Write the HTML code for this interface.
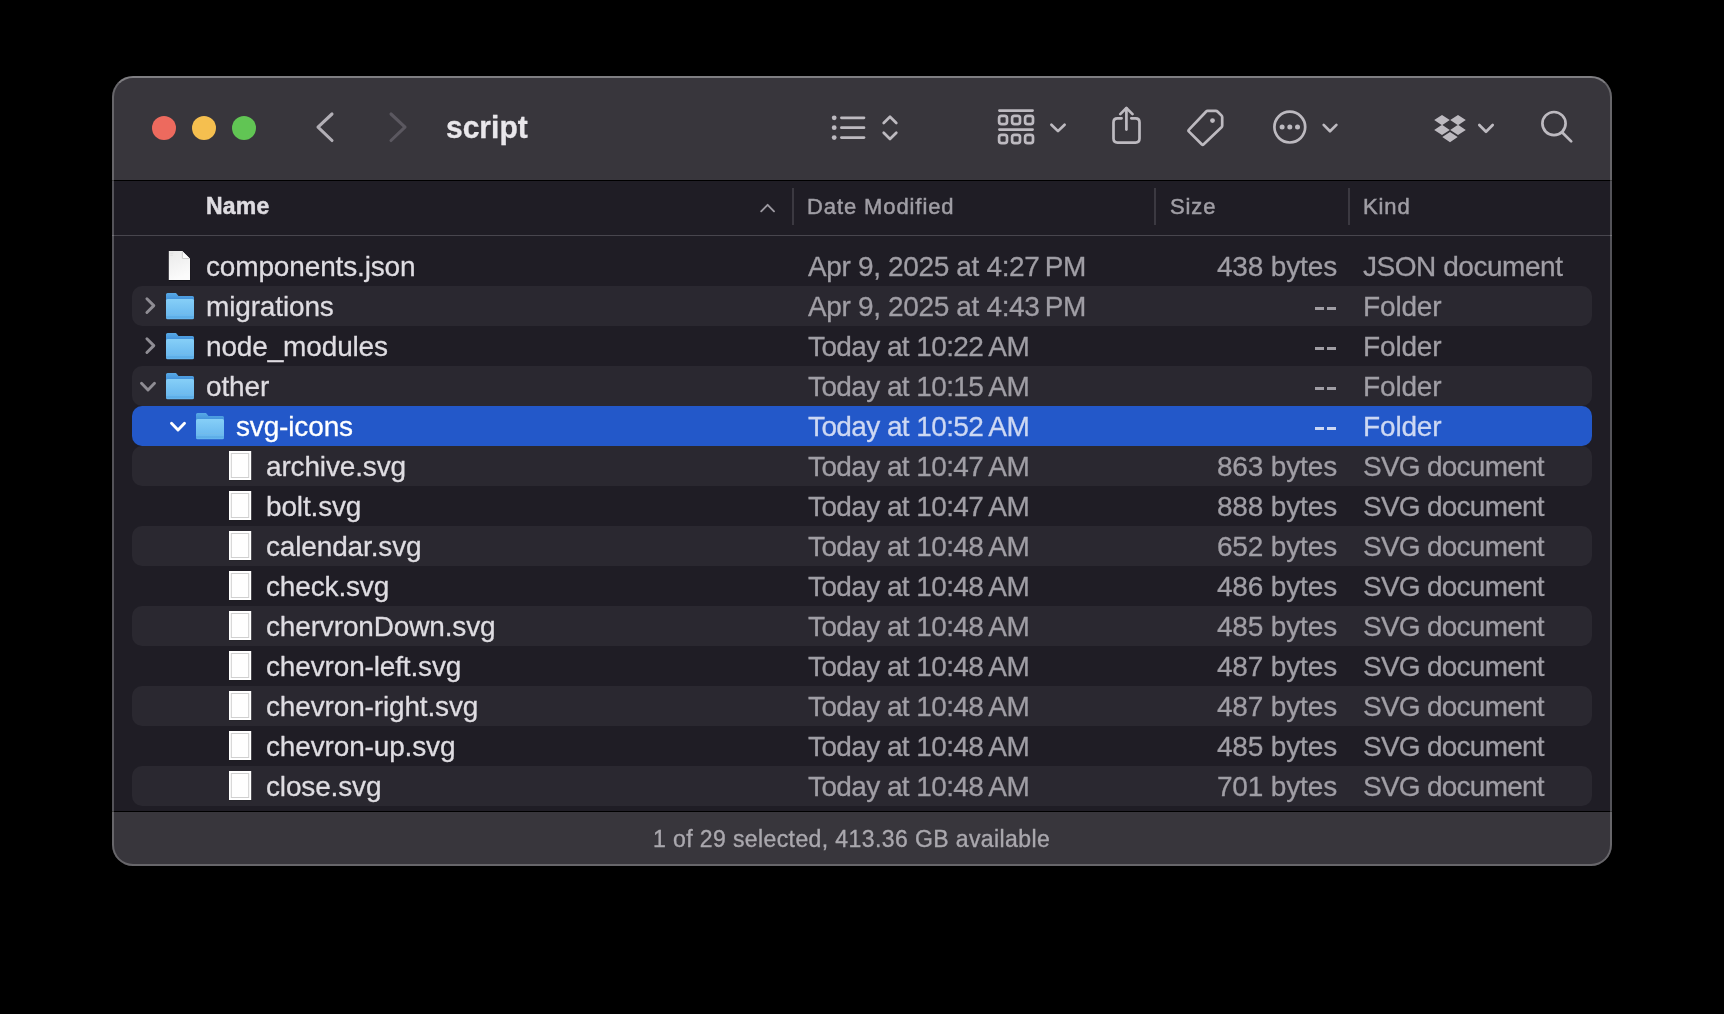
<!DOCTYPE html>
<html><head><meta charset="utf-8">
<style>
html,body{margin:0;padding:0;}
body{width:1724px;height:1014px;background:#000;position:relative;overflow:hidden;font-family:"Liberation Sans",sans-serif;}
#win{position:absolute;left:112px;top:76px;width:1500px;height:790px;border-radius:21px;background:#38363c;overflow:hidden;will-change:transform;}
#winborder{position:absolute;left:112px;top:76px;width:1500px;height:790px;border-radius:21px;box-sizing:border-box;border:2px solid rgba(255,255,255,0.24);border-top-color:rgba(255,255,255,0.36);}
.ln{position:absolute;left:0;width:1500px;}
#list{position:absolute;left:0;top:105px;width:1500px;height:630px;background:#1f1d25;}
.row{position:absolute;left:20px;width:1460px;height:40px;border-radius:10px;}
.alt{background:#2a2830;}
.sel{background:#2358c9;}
.t{position:absolute;white-space:nowrap;font-size:28px;letter-spacing:-0.15px;line-height:40px;top:0;-webkit-text-stroke-width:0.3px;}
.nm{color:#dfdde2;}
.gr{color:#a09ea5;}
.hd{position:absolute;top:-1px;font-size:22px;line-height:53px;white-space:nowrap;color:#a09ea5;letter-spacing:0.9px;-webkit-text-stroke-width:0.5px;}
svg{display:block;}
</style></head>
<body>
<div id="win">

<div style="position:absolute;left:40px;top:40px;width:24px;height:24px;border-radius:50%;background:#ed6a5e;"></div>
<div style="position:absolute;left:80px;top:40px;width:24px;height:24px;border-radius:50%;background:#f5bf4f;"></div>
<div style="position:absolute;left:120px;top:40px;width:24px;height:24px;border-radius:50%;background:#61c554;"></div>
<svg width="1500" height="104" viewBox="112 76 1500 104" style="position:absolute;left:0;top:0">
<path d="M332 114 L318 127.2 L332 140.5" fill="none" stroke="#b2afb6" stroke-width="3.1" stroke-linecap="round" stroke-linejoin="round"/>
<path d="M391 114 L405 127.2 L391 140.5" fill="none" stroke="#5b5860" stroke-width="3.1" stroke-linecap="round" stroke-linejoin="round"/>
<circle cx="834.2" cy="117.8" r="2.4" fill="#bdbac0"/>
<path d="M841.4 117.8 H864" fill="none" stroke="#bdbac0" stroke-width="2.7" stroke-linecap="round" stroke-linejoin="round" stroke-width="2.9"/>
<circle cx="834.2" cy="127.7" r="2.4" fill="#bdbac0"/>
<path d="M841.4 127.7 H864" fill="none" stroke="#bdbac0" stroke-width="2.7" stroke-linecap="round" stroke-linejoin="round" stroke-width="2.9"/>
<circle cx="834.2" cy="137.6" r="2.4" fill="#bdbac0"/>
<path d="M841.4 137.6 H864" fill="none" stroke="#bdbac0" stroke-width="2.7" stroke-linecap="round" stroke-linejoin="round" stroke-width="2.9"/>
<path d="M883.7 123 L890 116.7 L896.3 123 M883.7 132.7 L890 139 L896.3 132.7" fill="none" stroke="#bdbac0" stroke-width="2.7" stroke-linecap="round" stroke-linejoin="round" stroke-width="2.8"/>
<path d="M999.4 110.6 H1032.6 M999.4 129.6 H1032.6" fill="none" stroke="#bdbac0" stroke-width="2.7" stroke-linecap="round" stroke-linejoin="round" stroke-width="2.7"/>
<rect x="999.1" y="115.95" width="7.9" height="8.2" rx="2.4" fill="none" stroke="#bdbac0" stroke-width="2.7" stroke-linecap="round" stroke-linejoin="round" stroke-width="2.1"/>
<rect x="999.1" y="134.95" width="7.9" height="8.2" rx="2.4" fill="none" stroke="#bdbac0" stroke-width="2.7" stroke-linecap="round" stroke-linejoin="round" stroke-width="2.1"/>
<rect x="1012.1" y="115.95" width="7.9" height="8.2" rx="2.4" fill="none" stroke="#bdbac0" stroke-width="2.7" stroke-linecap="round" stroke-linejoin="round" stroke-width="2.1"/>
<rect x="1012.1" y="134.95" width="7.9" height="8.2" rx="2.4" fill="none" stroke="#bdbac0" stroke-width="2.7" stroke-linecap="round" stroke-linejoin="round" stroke-width="2.1"/>
<rect x="1025.1" y="115.95" width="7.9" height="8.2" rx="2.4" fill="none" stroke="#bdbac0" stroke-width="2.7" stroke-linecap="round" stroke-linejoin="round" stroke-width="2.1"/>
<rect x="1025.1" y="134.95" width="7.9" height="8.2" rx="2.4" fill="none" stroke="#bdbac0" stroke-width="2.7" stroke-linecap="round" stroke-linejoin="round" stroke-width="2.1"/>
<path d="M1051.4 124.7 L1058 131.1 L1064.6 124.7" fill="none" stroke="#bdbac0" stroke-width="2.7" stroke-linecap="round" stroke-linejoin="round" stroke-width="2.9"/>
<path d="M1121.6 118.3 H1117.5 Q1113.5 118.3 1113.5 122.3 V138.6 Q1113.5 142.6 1117.5 142.6 H1135.5 Q1139.5 142.6 1139.5 138.6 V122.3 Q1139.5 118.3 1135.5 118.3 H1131.3" fill="none" stroke="#bdbac0" stroke-width="2.7" stroke-linecap="round" stroke-linejoin="round" stroke-width="2.9"/>
<path d="M1126.4 129.6 V108.4" fill="none" stroke="#bdbac0" stroke-width="2.7" stroke-linecap="round" stroke-linejoin="round" stroke-width="2.6"/>
<path d="M1120.3 114.1 L1126.4 108 L1132.5 114.1" fill="none" stroke="#bdbac0" stroke-width="2.7" stroke-linecap="round" stroke-linejoin="round" stroke-width="2.4"/>
<path d="M1207.5 110.9 H1215.8 Q1216.9 110.9 1217.7 111.7 L1221.4 115.4 Q1222.2 116.2 1222.2 117.3 V125.6 Q1222.2 126.6 1221.5 127.3 L1203.7 144.3 Q1202.7 145.2 1201.7 144.3 L1189 131.6 Q1188 130.6 1189 129.6 L1206.2 111.5 Q1206.8 110.9 1207.5 110.9 Z" fill="none" stroke="#bdbac0" stroke-width="2.7" stroke-linecap="round" stroke-linejoin="round" stroke-width="2.8"/>
<circle cx="1212.5" cy="120.6" r="2.4" fill="#bdbac0"/>
<circle cx="1289.8" cy="127.1" r="15.4" fill="none" stroke="#bdbac0" stroke-width="2.7" stroke-linecap="round" stroke-linejoin="round" stroke-width="3"/>
<circle cx="1282.1" cy="127.1" r="2.5" fill="#bdbac0"/>
<circle cx="1289.8" cy="127.1" r="2.5" fill="#bdbac0"/>
<circle cx="1297.5" cy="127.1" r="2.5" fill="#bdbac0"/>
<path d="M1323.7 124.9 L1330 131.2 L1336.4 124.9" fill="none" stroke="#bdbac0" stroke-width="2.7" stroke-linecap="round" stroke-linejoin="round" stroke-width="2.8"/>
<path d="M1434.2 120.1 L1442 114.89999999999999 L1449.8 120.1 L1442 125.3 Z M1450.2 120.1 L1458 114.89999999999999 L1465.8 120.1 L1458 125.3 Z M1434.2 129.9 L1442 124.7 L1449.8 129.9 L1442 135.1 Z M1450.2 129.9 L1458 124.7 L1465.8 129.9 L1458 135.1 Z M1442.3 137.1 L1450 132.0 L1457.7 137.1 L1450 142.2 Z" fill="#bdbac0"/>
<path d="M1479.3 125 L1486 131.7 L1492.7 125" fill="none" stroke="#bdbac0" stroke-width="2.7" stroke-linecap="round" stroke-linejoin="round" stroke-width="2.8"/>
<circle cx="1554" cy="123.6" r="11.6" fill="none" stroke="#bdbac0" stroke-width="2.7" stroke-linecap="round" stroke-linejoin="round" stroke-width="3.4"/>
<path d="M1562.8 133 L1571.2 141.4" fill="none" stroke="#bdbac0" stroke-width="2.7" stroke-linecap="round" stroke-linejoin="round" stroke-width="3.9"/>
</svg>
<div style="position:absolute;left:334px;top:32px;font-size:30px;line-height:40px;font-weight:bold;color:#e9e7eb;white-space:nowrap;transform:scaleY(1.06);transform-origin:0 30.4px;-webkit-text-stroke-width:0.3px;">script</div>
<div class="ln" style="top:104px;height:1px;background:#000;"></div>
<div id="list">
<div class="hd" style="left:94px;top:-1px;font-size:23px;letter-spacing:0.2px;font-weight:bold;color:#dedce1;">Name</div>
<svg width="20" height="14" style="position:absolute;left:648px;top:20px"><path d="M1.2 10.3 L7.6 3.8 L14 10.3" fill="none" stroke="#9c99a1" stroke-width="1.9" stroke-linecap="round" stroke-linejoin="round"/></svg>
<div style="position:absolute;left:680px;top:7px;width:2px;height:37px;background:#3b3941;"></div>
<div style="position:absolute;left:1042px;top:7px;width:2px;height:37px;background:#3b3941;"></div>
<div style="position:absolute;left:1236px;top:7px;width:2px;height:37px;background:#3b3941;"></div>
<div class="hd" style="left:695px;">Date Modified</div>
<div class="hd" style="left:1058px;">Size</div>
<div class="hd" style="left:1251px;">Kind</div>
<div class="ln" style="top:54px;height:1px;background:#48464e;"></div>
<div class="row" style="top:65px;"></div>
<svg width="26" height="34" viewBox="-1.8 -1.9 26 34" style="position:absolute;left:55px;top:68px">
<defs><linearGradient id="dg" x1="0" y1="0" x2="0.3" y2="1"><stop offset="0" stop-color="#e9e9e9"/><stop offset="1" stop-color="#fbfbfb"/></linearGradient></defs>
<path d="M0 0.3 H13.6 L21.2 7.9 V29.3 H0 Z" fill="#000" opacity="0.45" transform="translate(0.2,0.5)"/>
<path d="M0 0 H13.4 L21.2 7.8 V29 H0 Z" fill="url(#dg)"/>
<path d="M13.4 0 V7.8 H21.2 Z" fill="#fdfdfd"/>
<path d="M13.6 0.4 V7.6 H20.8" fill="none" stroke="#c8c8c8" stroke-width="0.9"/>
<path d="M1.5 2.5 H4.5 M1.5 4.5 H4" stroke="#dedede" stroke-width="0.8"/>
</svg>
<div class="t" style="left:94px;top:66px;color:#dfdde2;">components.json</div>
<div class="t" style="left:696px;top:66px;color:#a09ea5;letter-spacing:-0.35px;">Apr 9, 2025 at 4:27 PM</div>
<div class="t" style="right:275px;top:66px;color:#a09ea5;text-align:right;">438 bytes</div>
<div class="t" style="left:1251px;top:66px;color:#a09ea5;letter-spacing:-0.45px;">JSON document</div>
<div class="row alt" style="top:105px;"></div>
<svg width="30" height="28" viewBox="0 0 30 28" style="position:absolute;left:53px;top:112px;overflow:visible">
<defs>
<linearGradient id="fb1" x1="0" y1="0" x2="0" y2="1"><stop offset="0" stop-color="#86cff7"/><stop offset="1" stop-color="#64b4ed"/></linearGradient>
<linearGradient id="ft1" x1="0" y1="0" x2="0" y2="1"><stop offset="0" stop-color="#58aae6"/><stop offset="1" stop-color="#3f8ed9"/></linearGradient>
</defs>
<path d="M1 1.5 Q1 0 2.5 0 H11 L13.5 3 H27.5 Q29 3 29 4.5 V8 H1 Z" fill="url(#ft1)"/>
<rect x="1" y="6" width="28" height="20.3" rx="1.6" fill="url(#fb1)"/>
<rect x="1" y="20" width="28" height="1" fill="#74bcea" opacity="0.8"/>
<rect x="1" y="23.5" width="28" height="1" fill="#4f9fdc" opacity="0.7"/>
</svg>
<svg width="40" height="40" viewBox="130 286 40 40" style="position:absolute;left:18px;top:105px"><path d="M146.9 298.70000000000005 L153.8 305.6 L146.9 312.5" fill="none" stroke="#8f8d94" stroke-width="2.9" stroke-linecap="round" stroke-linejoin="round"/></svg>
<div class="t" style="left:94px;top:106px;color:#dfdde2;">migrations</div>
<div class="t" style="left:696px;top:106px;color:#a09ea5;letter-spacing:-0.35px;">Apr 9, 2025 at 4:43 PM</div>
<div style="position:absolute;left:1203px;top:126px;width:9px;height:2.8px;background:#a09ea5;"></div>
<div style="position:absolute;left:1215px;top:126px;width:9px;height:2.8px;background:#a09ea5;"></div>
<div class="t" style="left:1251px;top:106px;color:#a09ea5;letter-spacing:-0.15px;">Folder</div>
<div class="row" style="top:145px;"></div>
<svg width="30" height="28" viewBox="0 0 30 28" style="position:absolute;left:53px;top:152px;overflow:visible">
<defs>
<linearGradient id="fb2" x1="0" y1="0" x2="0" y2="1"><stop offset="0" stop-color="#86cff7"/><stop offset="1" stop-color="#64b4ed"/></linearGradient>
<linearGradient id="ft2" x1="0" y1="0" x2="0" y2="1"><stop offset="0" stop-color="#58aae6"/><stop offset="1" stop-color="#3f8ed9"/></linearGradient>
</defs>
<path d="M1 1.5 Q1 0 2.5 0 H11 L13.5 3 H27.5 Q29 3 29 4.5 V8 H1 Z" fill="url(#ft2)"/>
<rect x="1" y="6" width="28" height="20.3" rx="1.6" fill="url(#fb2)"/>
<rect x="1" y="20" width="28" height="1" fill="#74bcea" opacity="0.8"/>
<rect x="1" y="23.5" width="28" height="1" fill="#4f9fdc" opacity="0.7"/>
</svg>
<svg width="40" height="40" viewBox="130 326 40 40" style="position:absolute;left:18px;top:145px"><path d="M146.9 338.70000000000005 L153.8 345.6 L146.9 352.5" fill="none" stroke="#8f8d94" stroke-width="2.9" stroke-linecap="round" stroke-linejoin="round"/></svg>
<div class="t" style="left:94px;top:146px;color:#dfdde2;">node_modules</div>
<div class="t" style="left:696px;top:146px;color:#a09ea5;letter-spacing:-0.6px;">Today at 10:22 AM</div>
<div style="position:absolute;left:1203px;top:166px;width:9px;height:2.8px;background:#a09ea5;"></div>
<div style="position:absolute;left:1215px;top:166px;width:9px;height:2.8px;background:#a09ea5;"></div>
<div class="t" style="left:1251px;top:146px;color:#a09ea5;letter-spacing:-0.15px;">Folder</div>
<div class="row alt" style="top:185px;"></div>
<svg width="30" height="28" viewBox="0 0 30 28" style="position:absolute;left:53px;top:192px;overflow:visible">
<defs>
<linearGradient id="fb3" x1="0" y1="0" x2="0" y2="1"><stop offset="0" stop-color="#86cff7"/><stop offset="1" stop-color="#64b4ed"/></linearGradient>
<linearGradient id="ft3" x1="0" y1="0" x2="0" y2="1"><stop offset="0" stop-color="#58aae6"/><stop offset="1" stop-color="#3f8ed9"/></linearGradient>
</defs>
<path d="M1 1.5 Q1 0 2.5 0 H11 L13.5 3 H27.5 Q29 3 29 4.5 V8 H1 Z" fill="url(#ft3)"/>
<rect x="1" y="6" width="28" height="20.3" rx="1.6" fill="url(#fb3)"/>
<rect x="1" y="20" width="28" height="1" fill="#74bcea" opacity="0.8"/>
<rect x="1" y="23.5" width="28" height="1" fill="#4f9fdc" opacity="0.7"/>
</svg>
<svg width="40" height="40" viewBox="128 366 40 40" style="position:absolute;left:16px;top:185px"><path d="M141.5 383.3 L148 389.9 L154.5 383.3" fill="none" stroke="#8f8d94" stroke-width="2.9" stroke-linecap="round" stroke-linejoin="round"/></svg>
<div class="t" style="left:94px;top:186px;color:#dfdde2;">other</div>
<div class="t" style="left:696px;top:186px;color:#a09ea5;letter-spacing:-0.6px;">Today at 10:15 AM</div>
<div style="position:absolute;left:1203px;top:206px;width:9px;height:2.8px;background:#a09ea5;"></div>
<div style="position:absolute;left:1215px;top:206px;width:9px;height:2.8px;background:#a09ea5;"></div>
<div class="t" style="left:1251px;top:186px;color:#a09ea5;letter-spacing:-0.15px;">Folder</div>
<div class="row sel" style="top:225px;"></div>
<svg width="30" height="28" viewBox="0 0 30 28" style="position:absolute;left:83px;top:232px;overflow:visible">
<defs>
<linearGradient id="fb4" x1="0" y1="0" x2="0" y2="1"><stop offset="0" stop-color="#86cff7"/><stop offset="1" stop-color="#64b4ed"/></linearGradient>
<linearGradient id="ft4" x1="0" y1="0" x2="0" y2="1"><stop offset="0" stop-color="#58aae6"/><stop offset="1" stop-color="#3f8ed9"/></linearGradient>
</defs>
<path d="M1 1.5 Q1 0 2.5 0 H11 L13.5 3 H27.5 Q29 3 29 4.5 V8 H1 Z" fill="url(#ft4)"/>
<rect x="1" y="6" width="28" height="20.3" rx="1.6" fill="url(#fb4)"/>
<rect x="1" y="20" width="28" height="1" fill="#74bcea" opacity="0.8"/>
<rect x="1" y="23.5" width="28" height="1" fill="#4f9fdc" opacity="0.7"/>
</svg>
<svg width="40" height="40" viewBox="158 406 40 40" style="position:absolute;left:46px;top:225px"><path d="M171.5 423.3 L178 429.9 L184.5 423.3" fill="none" stroke="#ffffff" stroke-width="2.9" stroke-linecap="round" stroke-linejoin="round"/></svg>
<div class="t" style="left:124px;top:226px;color:#ffffff;">svg-icons</div>
<div class="t" style="left:696px;top:226px;color:#cdd8f3;letter-spacing:-0.6px;">Today at 10:52 AM</div>
<div style="position:absolute;left:1203px;top:246px;width:9px;height:2.8px;background:#cdd8f3;"></div>
<div style="position:absolute;left:1215px;top:246px;width:9px;height:2.8px;background:#cdd8f3;"></div>
<div class="t" style="left:1251px;top:226px;color:#cdd8f3;letter-spacing:-0.15px;">Folder</div>
<div class="row alt" style="top:265px;"></div>
<svg width="24" height="31" viewBox="0 0 24 31" style="position:absolute;left:117px;top:269.9px">
<rect x="0.2" y="0.3" width="22.4" height="29.2" fill="#1a1a1a" opacity="0.35"/>
<rect x="-0.2" y="-0.1" width="22.4" height="29.1" fill="#ffffff"/>
<rect x="2.3" y="2.5" width="17.4" height="24.0" fill="none" stroke="#d0d0d0" stroke-width="1"/>
</svg>
<div class="t" style="left:154px;top:266px;color:#dfdde2;">archive.svg</div>
<div class="t" style="left:696px;top:266px;color:#a09ea5;letter-spacing:-0.6px;">Today at 10:47 AM</div>
<div class="t" style="right:275px;top:266px;color:#a09ea5;text-align:right;">863 bytes</div>
<div class="t" style="left:1251px;top:266px;color:#a09ea5;letter-spacing:-0.75px;">SVG document</div>
<div class="row" style="top:305px;"></div>
<svg width="24" height="31" viewBox="0 0 24 31" style="position:absolute;left:117px;top:309.9px">
<rect x="0.2" y="0.3" width="22.4" height="29.2" fill="#1a1a1a" opacity="0.35"/>
<rect x="-0.2" y="-0.1" width="22.4" height="29.1" fill="#ffffff"/>
<rect x="2.3" y="2.5" width="17.4" height="24.0" fill="none" stroke="#d0d0d0" stroke-width="1"/>
</svg>
<div class="t" style="left:154px;top:306px;color:#dfdde2;">bolt.svg</div>
<div class="t" style="left:696px;top:306px;color:#a09ea5;letter-spacing:-0.6px;">Today at 10:47 AM</div>
<div class="t" style="right:275px;top:306px;color:#a09ea5;text-align:right;">888 bytes</div>
<div class="t" style="left:1251px;top:306px;color:#a09ea5;letter-spacing:-0.75px;">SVG document</div>
<div class="row alt" style="top:345px;"></div>
<svg width="24" height="31" viewBox="0 0 24 31" style="position:absolute;left:117px;top:349.9px">
<rect x="0.2" y="0.3" width="22.4" height="29.2" fill="#1a1a1a" opacity="0.35"/>
<rect x="-0.2" y="-0.1" width="22.4" height="29.1" fill="#ffffff"/>
<rect x="2.3" y="2.5" width="17.4" height="24.0" fill="none" stroke="#d0d0d0" stroke-width="1"/>
</svg>
<div class="t" style="left:154px;top:346px;color:#dfdde2;">calendar.svg</div>
<div class="t" style="left:696px;top:346px;color:#a09ea5;letter-spacing:-0.6px;">Today at 10:48 AM</div>
<div class="t" style="right:275px;top:346px;color:#a09ea5;text-align:right;">652 bytes</div>
<div class="t" style="left:1251px;top:346px;color:#a09ea5;letter-spacing:-0.75px;">SVG document</div>
<div class="row" style="top:385px;"></div>
<svg width="24" height="31" viewBox="0 0 24 31" style="position:absolute;left:117px;top:389.9px">
<rect x="0.2" y="0.3" width="22.4" height="29.2" fill="#1a1a1a" opacity="0.35"/>
<rect x="-0.2" y="-0.1" width="22.4" height="29.1" fill="#ffffff"/>
<rect x="2.3" y="2.5" width="17.4" height="24.0" fill="none" stroke="#d0d0d0" stroke-width="1"/>
</svg>
<div class="t" style="left:154px;top:386px;color:#dfdde2;">check.svg</div>
<div class="t" style="left:696px;top:386px;color:#a09ea5;letter-spacing:-0.6px;">Today at 10:48 AM</div>
<div class="t" style="right:275px;top:386px;color:#a09ea5;text-align:right;">486 bytes</div>
<div class="t" style="left:1251px;top:386px;color:#a09ea5;letter-spacing:-0.75px;">SVG document</div>
<div class="row alt" style="top:425px;"></div>
<svg width="24" height="31" viewBox="0 0 24 31" style="position:absolute;left:117px;top:429.9px">
<rect x="0.2" y="0.3" width="22.4" height="29.2" fill="#1a1a1a" opacity="0.35"/>
<rect x="-0.2" y="-0.1" width="22.4" height="29.1" fill="#ffffff"/>
<rect x="2.3" y="2.5" width="17.4" height="24.0" fill="none" stroke="#d0d0d0" stroke-width="1"/>
</svg>
<div class="t" style="left:154px;top:426px;color:#dfdde2;">chervronDown.svg</div>
<div class="t" style="left:696px;top:426px;color:#a09ea5;letter-spacing:-0.6px;">Today at 10:48 AM</div>
<div class="t" style="right:275px;top:426px;color:#a09ea5;text-align:right;">485 bytes</div>
<div class="t" style="left:1251px;top:426px;color:#a09ea5;letter-spacing:-0.75px;">SVG document</div>
<div class="row" style="top:465px;"></div>
<svg width="24" height="31" viewBox="0 0 24 31" style="position:absolute;left:117px;top:469.9px">
<rect x="0.2" y="0.3" width="22.4" height="29.2" fill="#1a1a1a" opacity="0.35"/>
<rect x="-0.2" y="-0.1" width="22.4" height="29.1" fill="#ffffff"/>
<rect x="2.3" y="2.5" width="17.4" height="24.0" fill="none" stroke="#d0d0d0" stroke-width="1"/>
</svg>
<div class="t" style="left:154px;top:466px;color:#dfdde2;">chevron-left.svg</div>
<div class="t" style="left:696px;top:466px;color:#a09ea5;letter-spacing:-0.6px;">Today at 10:48 AM</div>
<div class="t" style="right:275px;top:466px;color:#a09ea5;text-align:right;">487 bytes</div>
<div class="t" style="left:1251px;top:466px;color:#a09ea5;letter-spacing:-0.75px;">SVG document</div>
<div class="row alt" style="top:505px;"></div>
<svg width="24" height="31" viewBox="0 0 24 31" style="position:absolute;left:117px;top:509.9px">
<rect x="0.2" y="0.3" width="22.4" height="29.2" fill="#1a1a1a" opacity="0.35"/>
<rect x="-0.2" y="-0.1" width="22.4" height="29.1" fill="#ffffff"/>
<rect x="2.3" y="2.5" width="17.4" height="24.0" fill="none" stroke="#d0d0d0" stroke-width="1"/>
</svg>
<div class="t" style="left:154px;top:506px;color:#dfdde2;">chevron-right.svg</div>
<div class="t" style="left:696px;top:506px;color:#a09ea5;letter-spacing:-0.6px;">Today at 10:48 AM</div>
<div class="t" style="right:275px;top:506px;color:#a09ea5;text-align:right;">487 bytes</div>
<div class="t" style="left:1251px;top:506px;color:#a09ea5;letter-spacing:-0.75px;">SVG document</div>
<div class="row" style="top:545px;"></div>
<svg width="24" height="31" viewBox="0 0 24 31" style="position:absolute;left:117px;top:549.9px">
<rect x="0.2" y="0.3" width="22.4" height="29.2" fill="#1a1a1a" opacity="0.35"/>
<rect x="-0.2" y="-0.1" width="22.4" height="29.1" fill="#ffffff"/>
<rect x="2.3" y="2.5" width="17.4" height="24.0" fill="none" stroke="#d0d0d0" stroke-width="1"/>
</svg>
<div class="t" style="left:154px;top:546px;color:#dfdde2;">chevron-up.svg</div>
<div class="t" style="left:696px;top:546px;color:#a09ea5;letter-spacing:-0.6px;">Today at 10:48 AM</div>
<div class="t" style="right:275px;top:546px;color:#a09ea5;text-align:right;">485 bytes</div>
<div class="t" style="left:1251px;top:546px;color:#a09ea5;letter-spacing:-0.75px;">SVG document</div>
<div class="row alt" style="top:585px;"></div>
<svg width="24" height="31" viewBox="0 0 24 31" style="position:absolute;left:117px;top:589.9px">
<rect x="0.2" y="0.3" width="22.4" height="29.2" fill="#1a1a1a" opacity="0.35"/>
<rect x="-0.2" y="-0.1" width="22.4" height="29.1" fill="#ffffff"/>
<rect x="2.3" y="2.5" width="17.4" height="24.0" fill="none" stroke="#d0d0d0" stroke-width="1"/>
</svg>
<div class="t" style="left:154px;top:586px;color:#dfdde2;">close.svg</div>
<div class="t" style="left:696px;top:586px;color:#a09ea5;letter-spacing:-0.6px;">Today at 10:48 AM</div>
<div class="t" style="right:275px;top:586px;color:#a09ea5;text-align:right;">701 bytes</div>
<div class="t" style="left:1251px;top:586px;color:#a09ea5;letter-spacing:-0.75px;">SVG document</div>
</div>
<div class="ln" style="top:735px;height:1px;background:#000;"></div>
<div style="position:absolute;left:541px;top:736px;height:54px;line-height:54px;white-space:nowrap;font-size:23px;letter-spacing:0.4px;-webkit-text-stroke-width:0.35px;color:#aaa8ae;">1 of 29 selected, 413.36 GB available</div>
</div>
<div id="winborder"></div>
</body></html>
